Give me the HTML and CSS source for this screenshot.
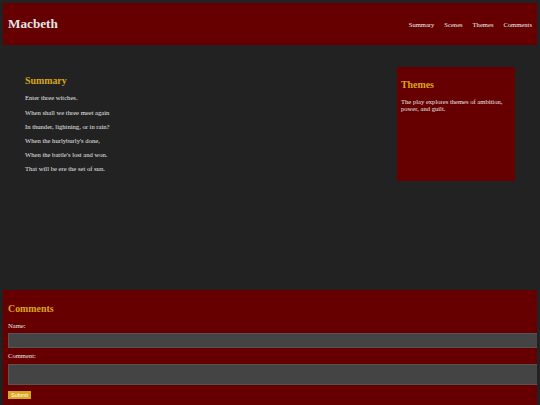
FILE: index.html
```html
<!DOCTYPE html>
<html lang="en">
<head>
  <meta charset="UTF-8" />
  <meta name="viewport" content="width=device-width, initial-scale=1.0" />
  <title>Macbeth</title>
  <link rel="stylesheet" href="styles.css">
</head>
<body>
  <header class="header">
    <h1 class="title">Macbeth</h1>
    <nav class="nav-bar">
      <a href="#summary">Summary</a>
      <a href="#scenes">Scenes</a>
      <a href="#themes">Themes</a>
      <a href="#comments">Comments</a>
    </nav>
  </header>

  <main class="main">
    <section class="summary" id="summary">
      <h2>Summary</h2>
      <p>Enter three witches.</p>
      <p>When shall we three meet again</p>
      <p>In thunder, lightning, or in rain?</p>
      <p>When the hurlyburly's done,</p>
      <p>When the battle's lost and won.</p>
      <p>That will be ere the set of sun.</p>
    </section>

    <aside class="themes" id="themes">
      <h2>Themes</h2>
      <p>The play explores themes of ambition, power, and guilt.</p>
    </aside>
  </main>

  <section class="comments" id="comments">
    <h2>Comments</h2>
    <form>
      <label for="name">Name:</label>
      <input type="text" id="name" name="name">
      <label for="comment">Comment:</label>
      <textarea id="comment" name="comment"></textarea>
      <button type="submit">Submit</button>
    </form>
  </section>
</body>
</html>
```

FILE: styles.css
```css
body {
  font-family: "Liberation Serif", "Times New Roman", serif;
  font-size: 6.6px;
  background-color: #222;
  color: #e6e6e6;
  margin: 3px 3px 0;
}
h2 {
  color: #daa520;
  font-size: 9.9px;
  margin: 8.2px 0;
}
p {
  margin: 6.6px 0;
}
.header {
  display: flex;
  align-items: center;
  justify-content: space-between;
  background-color: #660000;
  height: 42px;
  padding: 0 5px;
}
.title {
  font-size: 13.2px;
  margin: 0;
}
.nav-bar a {
  color: #eee;
  text-decoration: none;
  margin-left: 8.3px;
}
.main {
  display: flex;
  gap: 8px;
  padding: 22px;
  height: 245px;
  box-sizing: border-box;
  align-items: flex-start;
}
.summary {
  flex: 1;
}
.summary p {
  line-height: 7.6px;
}
.themes {
  width: 118px;
  height: 114px;
  box-sizing: border-box;
  padding: 4px;
  background-color: #660000;
}
/* the form runs past the right edge of the window */
.comments {
  height: 115px;
  margin-right: -3px;
  padding: 5px 0 0 5px;
  box-sizing: border-box;
  overflow: hidden;
  background-color: #660000;
}
.comments label {
  display: block;
}
.comments input,
.comments textarea {
  display: block;
  width: calc(100% + 20px);
  box-sizing: content-box;
  background-color: #444;
  border: 1px solid #555;
  color: #eee;
  padding: 0;
  margin: 4px 0;
}
.comments input {
  height: 12.7px;
}
.comments textarea {
  height: 19px;
  margin-top: 5px;
  margin-bottom: 6px;
  resize: none;
}
.comments button {
  background-color: #daa520;
  color: #fff;
  border: none;
  font-family: "Liberation Sans", Arial, sans-serif;
  font-size: 5.5px;
  height: 8px;
  padding: 0 3px;
}
```
